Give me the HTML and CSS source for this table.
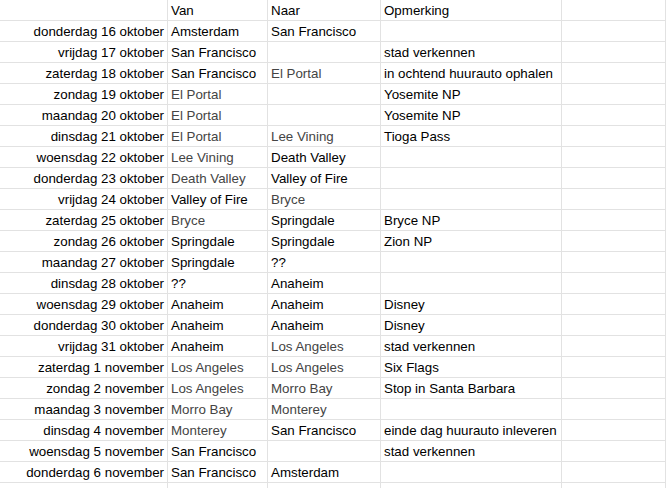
FILE: index.html
```html
<!DOCTYPE html>
<html lang="nl">
<head>
<meta charset="utf-8">
<title>Reisschema</title>
<link rel="stylesheet" href="styles.css">
</head>
<body>
<div class="sheet">
  <div class="c date"></div><div class="c">Van</div><div class="c">Naar</div><div class="c">Opmerking</div><div class="c"></div>

  <div class="c date">donderdag 16 oktober</div><div class="c">Amsterdam</div><div class="c">San Francisco</div><div class="c"></div><div class="c"></div>
  <div class="c date">vrijdag 17 oktober</div><div class="c">San Francisco</div><div class="c"></div><div class="c">stad verkennen</div><div class="c"></div>
  <div class="c date">zaterdag 18 oktober</div><div class="c">San Francisco</div><div class="c g">El Portal</div><div class="c">in ochtend huurauto ophalen</div><div class="c"></div>
  <div class="c date">zondag 19 oktober</div><div class="c g">El Portal</div><div class="c"></div><div class="c">Yosemite NP</div><div class="c"></div>
  <div class="c date">maandag 20 oktober</div><div class="c g">El Portal</div><div class="c"></div><div class="c">Yosemite NP</div><div class="c"></div>
  <div class="c date">dinsdag 21 oktober</div><div class="c g">El Portal</div><div class="c g">Lee Vining</div><div class="c">Tioga Pass</div><div class="c"></div>
  <div class="c date">woensdag 22 oktober</div><div class="c g">Lee Vining</div><div class="c">Death Valley</div><div class="c"></div><div class="c"></div>
  <div class="c date">donderdag 23 oktober</div><div class="c g">Death Valley</div><div class="c">Valley of Fire</div><div class="c"></div><div class="c"></div>
  <div class="c date">vrijdag 24 oktober</div><div class="c">Valley of Fire</div><div class="c g">Bryce</div><div class="c"></div><div class="c"></div>
  <div class="c date">zaterdag 25 oktober</div><div class="c g">Bryce</div><div class="c">Springdale</div><div class="c">Bryce NP</div><div class="c"></div>
  <div class="c date">zondag 26 oktober</div><div class="c">Springdale</div><div class="c">Springdale</div><div class="c">Zion NP</div><div class="c"></div>
  <div class="c date">maandag 27 oktober</div><div class="c">Springdale</div><div class="c">??</div><div class="c"></div><div class="c"></div>
  <div class="c date">dinsdag 28 oktober</div><div class="c">??</div><div class="c">Anaheim</div><div class="c"></div><div class="c"></div>
  <div class="c date">woensdag 29 oktober</div><div class="c">Anaheim</div><div class="c">Anaheim</div><div class="c">Disney</div><div class="c"></div>
  <div class="c date">donderdag 30 oktober</div><div class="c">Anaheim</div><div class="c">Anaheim</div><div class="c">Disney</div><div class="c"></div>
  <div class="c date">vrijdag 31 oktober</div><div class="c">Anaheim</div><div class="c g">Los Angeles</div><div class="c">stad verkennen</div><div class="c"></div>
  <div class="c date">zaterdag 1 november</div><div class="c g">Los Angeles</div><div class="c g">Los Angeles</div><div class="c">Six Flags</div><div class="c"></div>
  <div class="c date">zondag 2 november</div><div class="c g">Los Angeles</div><div class="c g">Morro Bay</div><div class="c">Stop in Santa Barbara</div><div class="c"></div>
  <div class="c date">maandag 3 november</div><div class="c g">Morro Bay</div><div class="c g">Monterey</div><div class="c"></div><div class="c"></div>
  <div class="c date">dinsdag 4 november</div><div class="c g">Monterey</div><div class="c">San Francisco</div><div class="c">einde dag huurauto inleveren</div><div class="c"></div>
  <div class="c date">woensdag 5 november</div><div class="c">San Francisco</div><div class="c"></div><div class="c">stad verkennen</div><div class="c"></div>
  <div class="c date">donderdag 6 november</div><div class="c">San Francisco</div><div class="c">Amsterdam</div><div class="c"></div><div class="c"></div>
  <div class="c date"></div><div class="c"></div><div class="c"></div><div class="c"></div><div class="c"></div>
</div>
</body>
</html>
```

FILE: styles.css
```css
html, body {
  margin: 0;
  padding: 0;
  background: #ffffff;
  overflow: hidden;
}

.sheet {
  display: grid;
  grid-template-columns: 168px 100px 113px 181px 1fr;
  grid-auto-rows: 21px;
  width: 666px;
  font-family: "Liberation Sans", Arial, sans-serif;
  font-size: 13.33px;
  color: #000000;
}

.c {
  box-sizing: border-box;
  border-right: 1px solid #e2e2e2;
  border-bottom: 1px solid #e2e2e2;
  padding: 1px 3px 0 3px;
  line-height: 20px;
  white-space: nowrap;
  overflow: hidden;
}

.date {
  text-align: right;
}

.g {
  color: #444444;
}
```
